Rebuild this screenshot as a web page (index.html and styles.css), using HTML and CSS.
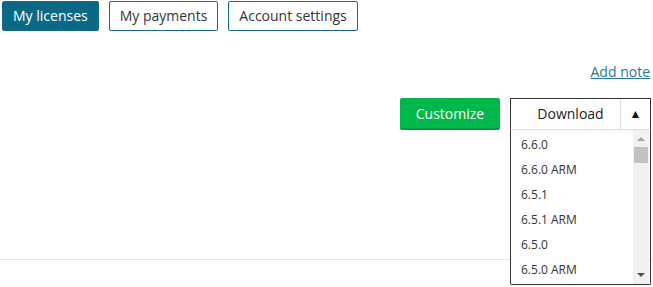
FILE: index.html
```html
<!DOCTYPE html>
<html lang="en">
<head>
    <meta charset="UTF-8">
    <title>Account</title>
    <link rel="stylesheet" href="styles.css">
</head>
<body>
    <!-- Tabs -->
    <div class="tabs">
        <a class="tab active" href="#">My licenses</a>
        <a class="tab" href="#">My payments</a>
        <a class="tab" href="#">Account settings</a>
    </div>

    <div class="note-row">
        <a href="#" class="add-note">Add note</a>
    </div>

    <!-- Actions -->
    <div class="actions">
        <button class="btn-customize">Customize</button>
        <div class="download">
            <div class="download-head">
                <span class="download-label">Download</span>
                <span class="download-toggle">&#9650;</span>
            </div>
            <div class="download-list">
                <ul class="versions">
                    <li>6.6.0</li>
                    <li>6.6.0 ARM</li>
                    <li>6.5.1</li>
                    <li>6.5.1 ARM</li>
                    <li>6.5.0</li>
                    <li>6.5.0 ARM</li>
                </ul>
                <div class="scrollbar">
                    <span class="arrow-up"></span>
                    <span class="thumb"></span>
                    <span class="arrow-down"></span>
                </div>
            </div>
        </div>
    </div>

    <div class="divider"></div>
</body>
</html>
```

FILE: styles.css
```css
/* Global */
body, html {
    margin: 0;
    padding: 0;
    font-family: "Open Sans", Arial, sans-serif;
    color: #222;
    background: #fff;
}

body {
    min-height: 287px;
}

/* Tabs */
.tabs {
    display: flex;
    gap: 10px;
    padding: 1px 2px 0;
}

.tab {
    display: block;
    height: 28px;
    line-height: 28px;
    padding: 0 10px;
    border: 1px solid #0d6c88;
    border-radius: 2px;
    color: #333;
    font-size: 14px;
    text-decoration: none;
}

.tab.active {
    background: #0b6985;
    color: #fff;
}

/* Add note */
.note-row {
    text-align: right;
    padding: 29px 3px 0 0;
    height: 20px;
}

.add-note {
    color: #1f7aa3;
    font-size: 14px;
}

/* Actions */
.actions {
    display: flex;
    justify-content: flex-end;
    gap: 10px;
    padding: 18px 2px 0 0;
}

.btn-customize {
    width: 100px;
    height: 32px;
    border: none;
    border-bottom: 2px solid #009a3c;
    border-radius: 2px;
    background: #00b84a;
    color: #fff;
    font-family: "Open Sans", Arial, sans-serif;
    font-size: 14px;
    padding: 0;
}

.download {
    position: relative;
    width: 141px;
    height: 32px;
}

.download-head {
    display: flex;
    border: 1px solid #333;
    border-bottom: 1px solid #ddd;
    box-sizing: border-box;
    height: 32px;
}

.download-label {
    flex: 1;
    padding-left: 10px;
    text-align: center;
    line-height: 30px;
    font-size: 14px;
    color: #222;
}

.download-toggle {
    width: 29px;
    border-left: 1px solid #ddd;
    text-align: center;
    line-height: 30px;
    font-size: 12px;
    color: #111;
}

/* Dropdown list */
.download-list {
    position: absolute;
    top: 32px;
    left: 0;
    right: 0;
    height: 154px;
    display: flex;
    background: #fff;
    border: 1px solid #333;
    border-top: none;
    border-radius: 0 0 2px 2px;
    z-index: 10;
}

.versions {
    flex: 1;
    list-style: none;
    margin: 0;
    padding: 2px 0 0 10px;
}

.versions li {
    height: 25px;
    line-height: 25px;
    font-size: 12px;
    color: #333;
}

.scrollbar {
    position: relative;
    width: 16px;
    background: #f1f1f1;
    margin-right: 1px;
}

.arrow-up, .arrow-down {
    position: absolute;
    left: 4px;
    width: 0;
    height: 0;
    border-left: 4px solid transparent;
    border-right: 4px solid transparent;
}

.arrow-up {
    top: 7px;
    border-bottom: 4px solid #a3a3a3;
}

.arrow-down {
    bottom: 7px;
    border-top: 4px solid #505050;
}

.thumb {
    position: absolute;
    top: 17px;
    left: 1px;
    width: 14px;
    height: 16px;
    background: #c1c1c1;
}

/* Bottom line */
.divider {
    margin-top: 129px;
    border-top: 1px solid #e2e2e2;
}
```
